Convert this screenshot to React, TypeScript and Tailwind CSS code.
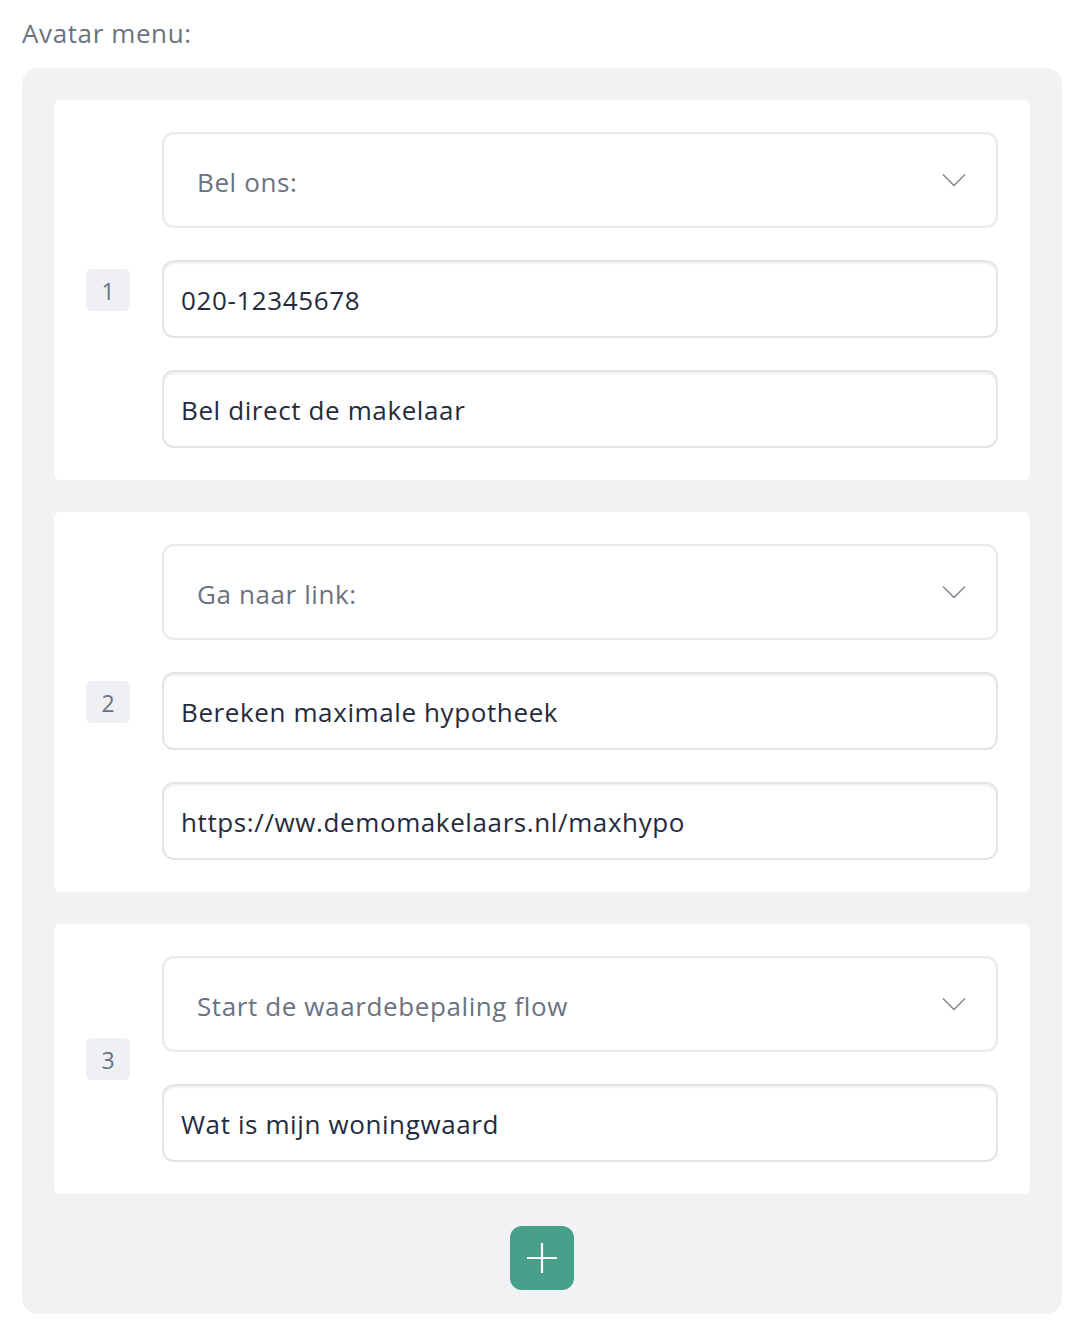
const items = [
  { n: 1, action: "Bel ons:", fields: ["020-12345678", "Bel direct de makelaar"] },
  { n: 2, action: "Ga naar link:", fields: ["Bereken maximale hypotheek", "https://ww.demomakelaars.nl/maxhypo"] },
  { n: 3, action: "Start de waardebepaling flow", fields: ["Wat is mijn woningwaard"] },
];

function Chevron() {
  return (
    <svg className="w-[24px] h-[14px] text-[#7b808c]" viewBox="0 0 24 14" fill="none" stroke="currentColor" strokeWidth={1.3}>
      <path d="M1 1.5 L12 12.5 L23 1.5" />
    </svg>
  );
}

export default function App() {
  return (
    <main className="w-[1074px] min-h-[1320px] bg-white pt-[15px] font-['Open_Sans','Liberation_Sans',sans-serif] tracking-[0.038em]">
      <h1 className="ml-[22px] text-[26px] leading-[36px] text-[#6b7280] mb-[17px]">Avatar menu:</h1>

      <div className="ml-[22px] w-[1040px] bg-[#f1f2f4] rounded-2xl px-8 pt-8 pb-6 flex flex-col gap-8">
        {items.map((item) => (
          <div key={item.n} className="bg-white rounded-md p-8 flex items-center gap-8">
            {/* Number badge */}
            <div className="w-[44px] h-[42px] shrink-0 rounded-md bg-[#eef0f4] flex items-center justify-center pt-[3px] text-[23px] text-[#6b7280] tracking-normal">
              {item.n}
            </div>

            <div className="flex-1 flex flex-col gap-8">
              {/* Action select */}
              <div className="h-[96px] border-2 border-[#e6e9ef] rounded-xl flex items-center justify-between pl-[33px] pr-[30px]">
                <span className="text-[26px] text-[#6b7280] pt-[4px]">{item.action}</span>
                <Chevron />
              </div>

              {item.fields.map((f) => (
                <div
                  key={f}
                  className="h-[78px] border-2 border-[#e3e4e8] rounded-xl flex items-center pl-[17px] shadow-[inset_0_2px_2px_rgba(0,0,0,0.06)]"
                >
                  <span className="text-[26px] text-[#252b3d] pt-[3px]">{f}</span>
                </div>
              ))}
            </div>
          </div>
        ))}

        <div className="flex justify-center">
          <button className="w-16 h-16 rounded-xl bg-[#48a08a] flex items-center justify-center">
            <svg className="w-[32px] h-[32px]" viewBox="0 0 32 32" fill="none" stroke="white" strokeWidth={2.2}>
              <path d="M16 1 V31 M1 16 H31" />
            </svg>
          </button>
        </div>
      </div>
    </main>
  );
}
